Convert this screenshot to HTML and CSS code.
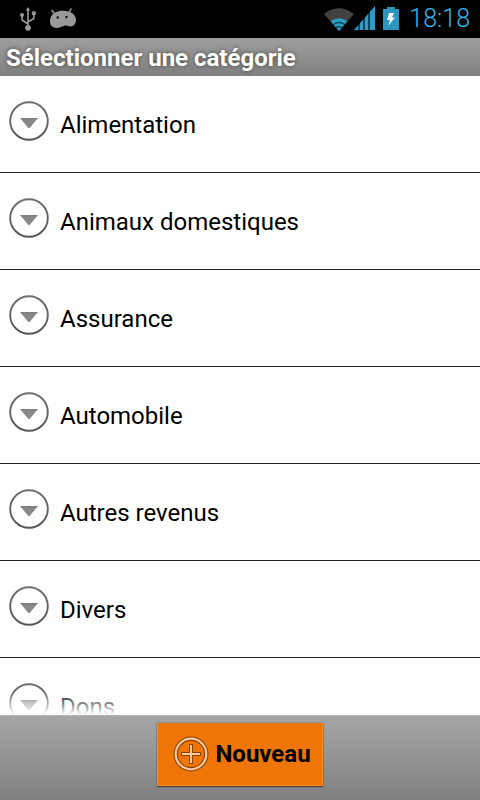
FILE: index.html
```html
<!DOCTYPE html>
<html lang="fr">
<head>
<meta charset="utf-8">
<meta name="viewport" content="width=device-width, initial-scale=1">
<title>Sélectionner une catégorie</title>
<link rel="stylesheet" href="styles.css">
</head>
<body>
<svg class="defs" width="0" height="0" aria-hidden="true">
  <defs>
    <linearGradient id="ring" x1="0" y1="0" x2="0" y2="1"><stop offset="0" stop-color="#707070"/><stop offset="1" stop-color="#555"/></linearGradient>
    <symbol id="expand" viewBox="0 0 40 40">
      <circle cx="20" cy="20" r="18.8" fill="#fff" stroke="url(#ring)" stroke-width="1.9"/>
      <path d="M11.300 17.300h17.400l-7.800 9.400q-.9.900-1.800 0z" fill="#888"/>
      <path d="M11.500 17.700h17" stroke="#777" stroke-width="1"/>
    </symbol>
  </defs>
</svg>
<div class="status">
  <svg class="usb" width="18" height="24" viewBox="0 0 18 24" fill="none" stroke="#999" stroke-width="1.6" aria-hidden="true">
    <path d="M9 3v17M9 17l-6-4V8M9 15l5.800-3.500V7"/>
    <path d="M9 0l2.200 3.500H6.800zM12.800 4.500h4v3.600h-4z" fill="#999" stroke="none"/>
    <circle cx="3" cy="8" r="2" fill="#999" stroke="none"/>
    <circle cx="9" cy="20.800" r="2.900" fill="#999" stroke="none"/>
  </svg>
  <svg class="droid" width="28" height="22" viewBox="0 0 28 22" aria-hidden="true">
    <path d="M3 2.500l3 4M22 1l-2 4" stroke="#999" stroke-width="1.600" stroke-linecap="round"/>
    <path d="M1 13C1 7 6 3 13 2.700C21 2.300 27 6 27 12C27 17 23 19.500 19 18C16 17 15 18 12 19C7 21 1 20 1 13z" fill="#999"/>
    <circle cx="8.700" cy="9.500" r="1.200" fill="#111"/><circle cx="17.500" cy="9" r="1.200" fill="#111"/>
  </svg>
  <svg class="wifi" width="30" height="23" viewBox="0 0 30 23" aria-hidden="true">
    <path d="M15 23L0 6Q15-5.500 30 6z" fill="#424242"/>
    <path d="M15 23L7 14Q15 8.500 23 14z" fill="#12495e"/>
    <g fill="none" stroke="#2d9bc6">
      <path d="M7.800 14.500Q15 9.600 22.200 14.500" stroke-width="3.400"/>
      <path d="M10.600 18Q15 15.200 19.400 18" stroke-width="2.600"/>
    </g>
    <path d="M12.600 20.300Q15 18.700 17.400 20.300L15 23z" fill="#2d9bc6"/>
  </svg>
  <svg class="signal" width="21" height="24" viewBox="0 0 21 24" aria-hidden="true">
    <path d="M0 24L21 0V24z" fill="#10435a"/>
    <path d="M0 24l4-4.600V24zM6 24v-6.900l3-3.400V24zM11 24V11.400l3-3.400V24zM16 24V5.700L21 0V24z" fill="#2d9bc6"/>
  </svg>
  <svg class="battery" width="16" height="24" viewBox="0 0 16 24" aria-hidden="true">
    <path d="M0 3h4V1h8v2h4v21H0z" fill="#2d94bd"/>
    <path d="M6 7h5.200L9 11.500h3L5.500 19.500l1.300-5.500H4z" fill="#eef7fa"/>
  </svg>
  <time class="clock">18:18</time>
</div>
<header class="title"><h1>Sélectionner une catégorie</h1></header>
<main class="list">
  <ul>
    <li><button class="row" type="button"><svg class="icon" aria-hidden="true"><use href="#expand"/></svg><span>Alimentation</span></button></li>
    <li><button class="row" type="button"><svg class="icon" aria-hidden="true"><use href="#expand"/></svg><span>Animaux domestiques</span></button></li>
    <li><button class="row" type="button"><svg class="icon" aria-hidden="true"><use href="#expand"/></svg><span>Assurance</span></button></li>
    <li><button class="row" type="button"><svg class="icon" aria-hidden="true"><use href="#expand"/></svg><span>Automobile</span></button></li>
    <li><button class="row" type="button"><svg class="icon" aria-hidden="true"><use href="#expand"/></svg><span>Autres revenus</span></button></li>
    <li><button class="row" type="button"><svg class="icon" aria-hidden="true"><use href="#expand"/></svg><span>Divers</span></button></li>
    <li><button class="row" type="button"><svg class="icon" aria-hidden="true"><use href="#expand"/></svg><span>Dons</span></button></li>
  </ul>
</main>
<footer class="bar">
  <button class="new" type="button">
    <svg width="36" height="36" viewBox="0 0 36 36" fill="none" aria-hidden="true">
      <circle cx="18" cy="18" r="15.300" stroke="#8a4208" stroke-width="4.400"/>
      <path d="M18 8v20M8 18h20" stroke="#8a4208" stroke-width="4"/>
      <circle cx="18" cy="18" r="15.300" stroke="#fbc99c" stroke-width="2.200"/>
      <path d="M18 9v18M9 18h18" stroke="#fbc99c" stroke-width="2"/>
    </svg>
    <span>Nouveau</span>
  </button>
</footer>
</body>
</html>
```

FILE: styles.css
```css
* {
  box-sizing: border-box;
}

body {
  margin: 0;
  height: 100vh;
  display: flex;
  flex-direction: column;
  background: #fff;
  color: #000;
  font-family: Roboto, "Noto Sans", sans-serif;
}

button {
  font: inherit;
  color: inherit;
  border: 0;
  margin: 0;
  cursor: pointer;
}

.defs {
  position: absolute;
}

.status {
  flex: none;
  display: flex;
  align-items: center;
  height: 38px;
  padding: 0 10px 0 19px;
  background: #000;
}

.droid {
  margin-left: 12px;
}

.wifi {
  margin-left: auto;
}

.signal {
  margin-right: 8px;
}

.battery,
.signal {
  margin-bottom: 2px;
}

.clock {
  margin-left: 10px;
  color: #33b5e5;
  font-size: 25px;
  font-weight: 300;
  line-height: 40px;
}

.title {
  flex: none;
  height: 38px;
  padding: 0 6px;
  background: linear-gradient(#9e9e9e, #808080);
}

.title h1 {
  margin: 0;
  color: #fff;
  font-size: 24px;
  font-weight: 700;
  line-height: 40px;
  text-shadow: 0 0 4px #444;
}

.list {
  position: relative;
  flex: 1;
  min-height: 0;
  overflow: hidden;
}

.list::after {
  content: "";
  position: absolute;
  inset: auto 0 0;
  height: 24px;
  background: linear-gradient(rgba(255, 255, 255, 0), #fff);
  pointer-events: none;
}

.list ul {
  margin: 0;
  padding: 0;
  list-style: none;
}

.list li {
  border-bottom: 1px solid #222;
}

.row {
  display: flex;
  align-items: center;
  gap: 11px;
  width: 100%;
  height: 96px;
  padding: 2px 9px 0;
  background: none;
  font-size: 24px;
  line-height: 32px;
  text-align: left;
}

.icon {
  width: 40px;
  height: 40px;
  margin-bottom: 8px;
}

.bar {
  flex: none;
  display: flex;
  justify-content: center;
  padding: 7px 0 14px;
  border-top: 1px solid #b5b5b5;
  background: linear-gradient(#a6a6a6, #808080);
}

.new {
  display: flex;
  align-items: center;
  gap: 6px;
  height: 63px;
  padding: 0 11px 0 15px;
  border: solid #ff8c1a;
  border-width: 0 1px 1px;
  background: #f07507;
  box-shadow: 0 1px 1px #444, 0 0 1px #444;
  font-size: 24px;
  font-weight: 700;
}
```
